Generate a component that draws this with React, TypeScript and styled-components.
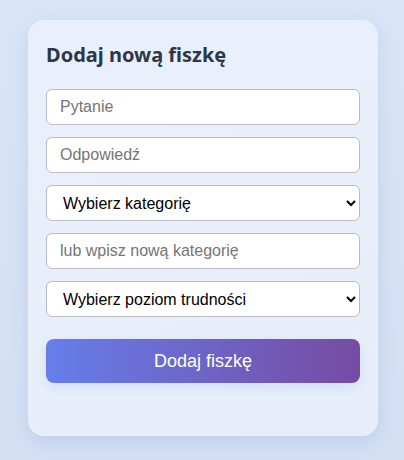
import React from "react";
import styled, { createGlobalStyle } from "styled-components";

const Global = createGlobalStyle`
  html, body { margin: 0; padding: 0; }
  body {
    width: 404px;
    height: 460px;
    background: linear-gradient(180deg, #d9e5f7 0%, #d3e0f4 100%);
    font-family: "Liberation Sans", Arial, sans-serif;
    overflow: hidden;
  }
`;

const Page = styled.div`
  padding: 20px 26px 24px 28px;
`;

const Card = styled.div`
  width: 350px;
  height: 416px;
  box-sizing: border-box;
  padding: 22px 18px 18px;
  border-radius: 16px;
  background: linear-gradient(160deg, #e9effb 0%, #e7eefa 100%);
  box-shadow: 0 6px 18px rgba(120, 150, 200, 0.22);
`;

const Title = styled.h2`
  margin: 0 0 21px;
  font-family: "Segoe UI", "Noto Sans", "Open Sans", sans-serif;
  font-weight: 700;
  font-size: 20px;
  line-height: 26px;
  color: #2d3748;
`;

const Form = styled.div`
  display: flex;
  flex-direction: column;
  gap: 12px;
`;

const Field = styled.input`
  box-sizing: border-box;
  width: 314px;
  height: 36px;
  padding: 0 13px;
  border: 1px solid #b9bcc3;
  border-radius: 6px;
  background: #fff;
  font-family: "Liberation Sans", Arial, sans-serif;
  font-size: 16px;
  color: #222;
  outline: none;
  &::placeholder { color: #757575; }
`;

const Select = styled.select`
  box-sizing: border-box;
  width: 314px;
  height: 36px;
  padding: 0 8px 0 12px;
  border: 1px solid #b9bcc3;
  border-radius: 6px;
  background: #fff;
  font-family: "Liberation Sans", Arial, sans-serif;
  font-size: 16px;
  color: #000;
  outline: none;
`;

const Button = styled.button`
  margin-top: 10px;
  width: 314px;
  height: 44px;
  border: none;
  border-radius: 8px;
  background: linear-gradient(90deg, #667eea 0%, #764ba2 100%);
  color: #fff;
  font-family: "Liberation Sans", Arial, sans-serif;
  font-size: 18px;
  box-shadow: 0 4px 12px rgba(102, 126, 234, 0.15);
  cursor: pointer;
`;

export default function App() {
  return (
    <>
      <Global />
      <Page>
        <Card>
          <Title>Dodaj nową fiszkę</Title>
          <Form>
            <Field placeholder="Pytanie" />
            <Field placeholder="Odpowiedź" />
            <Select defaultValue="">
              <option value="">Wybierz kategorię</option>
            </Select>
            <Field placeholder="lub wpisz nową kategorię" />
            <Select defaultValue="">
              <option value="">Wybierz poziom trudności</option>
            </Select>
            <Button>Dodaj fiszkę</Button>
          </Form>
        </Card>
      </Page>
    </>
  );
}
